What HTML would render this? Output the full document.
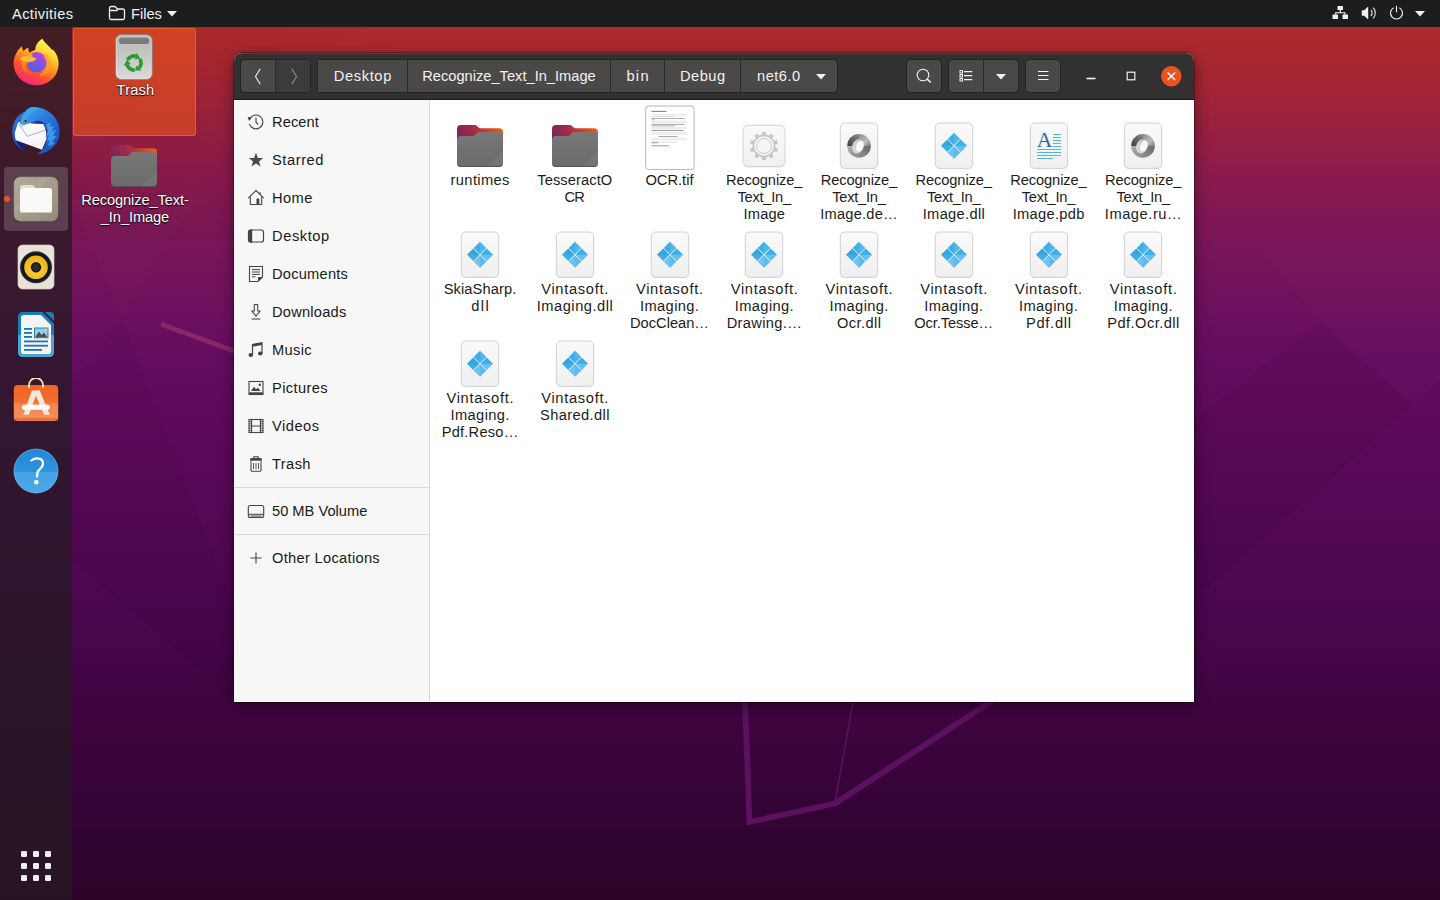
<!DOCTYPE html>
<html lang="en">
<head>
<meta charset="utf-8">
<title>Files</title>
<style>
*{box-sizing:border-box;margin:0;padding:0}
html,body{width:1440px;height:900px;overflow:hidden}
body{position:relative;font-family:"Liberation Sans","DejaVu Sans",sans-serif;font-size:14.67px;color:#fff;
background:#5b0d57}
.abs{position:absolute}
#wall{position:absolute;left:0;top:0;width:1440px;height:900px}
#topbar{position:absolute;left:0;top:0;width:1440px;height:27px;background:#1d1d1d;color:#f2f2f2}
#topbar .t{position:absolute;top:1px;height:27px;line-height:27px;white-space:nowrap}
#dock{position:absolute;left:0;top:27px;width:72px;height:873px;background:rgba(38,26,34,.76)}
#dock .act{position:absolute;left:4px;top:140px;width:64px;height:64px;border-radius:4px;background:rgba(255,255,255,.17)}
#dock .dot{position:absolute;left:4px;top:169px;width:6px;height:6px;border-radius:50%;background:#e95420}
.dicon{position:absolute}
/* desktop */
.dlabel{position:absolute;text-align:center;color:#fff;line-height:17px;text-shadow:0 1px 1px rgba(0,0,0,.9),0 0 2px rgba(0,0,0,.6);white-space:nowrap}
#sel{position:absolute;left:73px;top:28px;width:123px;height:108px;border-radius:3px;background:rgba(233,84,32,.6);border:1px solid rgba(240,96,40,.85)}
/* window */
#win{position:absolute;left:234px;top:53px;width:960px;height:649px;border-radius:8px 8px 0 0;background:#fff;
box-shadow:0 0 0 1px rgba(0,0,0,.3),0 4px 15px rgba(0,0,0,.45)}
#hdr{position:absolute;left:0;top:0;width:960px;height:47px;border-radius:8px 8px 0 0;background:#323031;border-bottom:1px solid #1c1b1b;box-shadow:inset 0 1px 0 rgba(255,255,255,.11)}
.btn{position:absolute;top:6px;height:34px;background:#4a4948;border:1px solid #242323;border-radius:5px;overflow:hidden}
.btn svg{position:absolute}
.dv{position:absolute;top:0;width:1px;height:32px;background:#2a2929}
.seg{position:absolute;top:0;height:32px;line-height:32px;color:#f2f1f0;white-space:nowrap;text-align:center}
#side{position:absolute;left:0;top:47px;width:196px;height:602px;background:#f7f7f7;border-right:1px solid #d8d8d8;color:#1a1a1a}
.srow{position:absolute;left:0;width:195px;height:38px;line-height:38px;padding-left:38px;white-space:nowrap}
.srow svg{position:absolute;left:13px;top:10px;width:18px;height:18px;overflow:visible}
.ssep{position:absolute;left:0;width:195px;height:1px;background:#dadada}
#main{position:absolute;left:196px;top:47px;width:764px;height:602px;background:#fff;color:#1a1a1a}
.f{position:absolute;width:110px;margin-left:-7px;text-align:center;line-height:17px;color:#1b1b1b;white-space:nowrap;padding-top:50px}
.f svg{position:absolute;left:31px;top:0;width:48px;height:48px}
</style>
</head>
<body>
<svg width="0" height="0" style="position:absolute">
<defs>
<linearGradient id="fdb" x1="0" y1=".35" x2="1" y2="0"><stop offset="0" stop-color="#7d2156"/><stop offset=".35" stop-color="#9c2a4c"/><stop offset=".7" stop-color="#d4451f"/><stop offset="1" stop-color="#f2661b"/></linearGradient>
<linearGradient id="fdf" x1="0" y1="0" x2="0" y2="1"><stop offset="0" stop-color="#787878"/><stop offset="1" stop-color="#6a6a6a"/></linearGradient>
<linearGradient id="pgf" x1="0" y1="0" x2="0" y2="1"><stop offset="0" stop-color="#fafafa"/><stop offset="1" stop-color="#efefef"/></linearGradient>
<linearGradient id="jsa" x1="0" y1="0" x2="1" y2="1"><stop offset="0" stop-color="#2e2e2e"/><stop offset=".5" stop-color="#7a7a7a"/><stop offset="1" stop-color="#d6d6d6"/></linearGradient>
<linearGradient id="jsb" x1="1" y1="1" x2="0" y2="0"><stop offset="0" stop-color="#3a3a3a"/><stop offset=".6" stop-color="#9a9a9a"/><stop offset="1" stop-color="#e8e8e8"/></linearGradient>
<linearGradient id="jq1" x1="0" y1="1" x2="1" y2="0"><stop offset="0" stop-color="#3e3e3e"/><stop offset="1" stop-color="#8a8a8a"/></linearGradient>
<linearGradient id="jq2" x1="0" y1="0" x2="1" y2="1"><stop offset="0" stop-color="#8e8e8e"/><stop offset=".6" stop-color="#bcbcbc"/><stop offset="1" stop-color="#7a7a7a"/></linearGradient>
<linearGradient id="jq3" x1="1" y1="0" x2="0" y2="1"><stop offset="0" stop-color="#666666"/><stop offset="1" stop-color="#909090"/></linearGradient>
<linearGradient id="jq4" x1="1" y1="1" x2="0" y2="0"><stop offset="0" stop-color="#8c8c8c"/><stop offset="1" stop-color="#b0b0b0"/></linearGradient>
<linearGradient id="jq5" x1="0" y1="1" x2="1" y2="0"><stop offset="0" stop-color="#e6e6e6"/><stop offset=".6" stop-color="#c4c4c4"/><stop offset="1" stop-color="#8a8a8a"/></linearGradient>
<symbol id="s-folder" viewBox="0 0 48 48">
<path d="M1 7 a4 4 0 0 1 4 -4 h13 c2 0 2.800 .6 3.800 1.700 l.8 .9 c.5 .5 1 .7 1.800 .7 H43 a4 4 0 0 1 4 4 V40 H1 Z" fill="url(#fdb)"/>
<path d="M1 18 a4 4 0 0 1 4 -4 h11.500 c1.500 0 2.200 -.4 3 -1.300 l1.200 -1.400 c.8 -.9 1.500 -1.300 3 -1.300 H43 a4 4 0 0 1 4 4 V41 a4 4 0 0 1 -4 4 H5 a4 4 0 0 1 -4 -4 Z" fill="url(#fdf)"/>
<path d="M47 30 V41 a4 4 0 0 1 -4 4 H30 Z" fill="#fff" opacity=".06"/>
<path d="M1 40 v1 a4 4 0 0 0 4 4 H43 a4 4 0 0 0 4 -4 v-1 a4 4 0 0 1 -4 4 H5 a4 4 0 0 1 -4 -4 Z" fill="#4f4f4f" opacity=".8"/>
</symbol>
<symbol id="s-page" viewBox="0 0 48 48">
<rect x="5.300" y="1.500" width="37.400" height="45.500" rx="4.500" fill="#000" opacity=".10"/>
<rect x="5.300" y="1" width="37.400" height="45.400" rx="4.500" fill="url(#pgf)" stroke="#cdcdcd" stroke-width=".9"/>
</symbol>
<symbol id="s-dll" viewBox="0 0 48 48">
<use href="#s-page"/>
<path d="M24 10.700 L37 23.700 L24 36.700 L11 23.700 Z" fill="#3daee9"/>
<path d="M24 10.700 L30.500 17.200 L24 23.700 Z" fill="#fff" opacity=".10"/>
<path d="M37 23.700 L30.500 30.200 L24 23.700 Z" fill="#fff" opacity=".22"/>
<path d="M24 23.700 L30.500 30.200 L24 36.700 L17.500 30.200 Z" fill="#fff" opacity=".16"/>
<path d="M11 23.700 L17.500 17.200 L24 23.700 Z" fill="#000" opacity=".06"/>
<path d="M24 23.700 L24 36.700 L17.500 30.200 Z" fill="#fff" opacity=".12"/>
<path d="M17.500 17.200 L30.500 30.200 M30.500 17.200 L17.500 30.200" stroke="#f4fbff" stroke-width=".9" fill="none"/>
</symbol>
<symbol id="s-json" viewBox="0 0 48 48">
<use href="#s-page"/>
<path d="M24 23.900 L12.200 23.900 A11.800 11.800 0 0 1 24 12.100 Z" fill="url(#jq1)"/>
<path d="M24 23.900 L24 12.100 A11.800 11.800 0 0 1 35.800 23.900 Z" fill="url(#jq2)"/>
<path d="M24 23.900 L35.800 23.900 A11.800 11.800 0 0 1 24 35.700 Z" fill="url(#jq3)"/>
<path d="M24 23.900 L24 35.700 A11.800 11.800 0 0 1 12.200 23.900 Z" fill="url(#jq4)"/>
<ellipse cx="23" cy="24.300" rx="5.700" ry="7.400" transform="rotate(20 23 24.300)" fill="url(#jq5)"/>
<ellipse cx="24.900" cy="24" rx="3.700" ry="5.800" transform="rotate(20 24.900 24)" fill="#f8f8f8"/>
</symbol>
<symbol id="s-exec" viewBox="0 0 48 48">
<rect x="3" y="3.800" width="42" height="41.500" rx="5" fill="#000" opacity=".10"/>
<rect x="3" y="3.300" width="42" height="41.400" rx="5" fill="url(#pgf)" stroke="#cfcfcf" stroke-width=".9"/>
<g transform="translate(24 24)" fill="#c6c6c6">
<g id="gt"><rect x="-1.900" y="-14" width="3.800" height="3.600" rx=".5"/><rect x="-1.900" y="10.400" width="3.800" height="3.600" rx=".5"/></g>
<use href="#gt" transform="rotate(36)"/><use href="#gt" transform="rotate(72)"/><use href="#gt" transform="rotate(108)"/><use href="#gt" transform="rotate(144)"/>
<circle r="10.600" fill="none" stroke="#c6c6c6" stroke-width="1.700"/>
<circle r="7.500" fill="none" stroke="#c6c6c6" stroke-width=".9"/>
</g>
</symbol>
<symbol id="s-pdb" viewBox="0 0 48 48">
<use href="#s-page"/>
<text x="11.800" y="25.300" font-family="'Liberation Serif','DejaVu Serif',serif" font-size="21.500" fill="#2b67b0">A</text>
<g stroke="#4db4ec" stroke-width="1">
<path d="M28 12.500 H36 M28 15.500 H36 M28 18.500 H36 M28 21.500 H36 M28 24.500 H36 M12 27.500 H36 M12 30.500 H36 M12 33.500 H36 M12 36.500 H28"/>
</g>
</symbol>
</defs></svg>
<svg id="wall" viewBox="0 0 1440 900">
<defs>
<linearGradient id="wg" x1="0" y1="0" x2="0" y2="1">
<stop offset="0" stop-color="#b32b29"/>
<stop offset="0.03" stop-color="#b02a2a"/>
<stop offset="0.11" stop-color="#a02338"/>
<stop offset="0.2" stop-color="#8a1a4e"/>
<stop offset="0.28" stop-color="#78155a"/>
<stop offset="0.39" stop-color="#660d60"/>
<stop offset="0.5" stop-color="#5a0959"/>
<stop offset="0.61" stop-color="#500752"/>
<stop offset="0.72" stop-color="#47064a"/>
<stop offset="0.78" stop-color="#400541"/>
<stop offset="0.89" stop-color="#350337"/>
<stop offset="1" stop-color="#2b0428"/>
</linearGradient>
<linearGradient id="wl" x1="0" y1="0" x2="1" y2="0">
<stop offset="0" stop-color="#000" stop-opacity=".06"/>
<stop offset="0.3" stop-color="#000" stop-opacity="0"/>
</linearGradient>
</defs>
<rect width="1440" height="900" fill="url(#wg)"/>
<rect width="1440" height="240" fill="url(#wl)"/>
<polygon points="122,318 234,610 234,700 72,560 72,385" fill="#000" opacity=".03"/>
<polygon points="72,200 195,200 122,318" fill="#fff" opacity=".012"/>
<polygon points="1194,420 1320,321 1413,405 1194,600" fill="#000" opacity=".04"/>
<polygon points="1260,250 1440,250 1440,380 1413,405 1320,321" fill="#fff" opacity=".012"/>
<path d="M161 324 L234 351" stroke="#8a2769" stroke-width="5" fill="none"/>
<path d="M745 700 L749.500 822 L835 803.500 L992 701" stroke="#5c1060" stroke-width="5.800" fill="none" stroke-linejoin="miter"/>
<path d="M835 802 L853.500 700" stroke="#5c1060" stroke-width="1.500" fill="none"/>
</svg>
<div id="dock"><div class="act"></div><div class="dot"></div>
<!-- firefox -->
<svg class="dicon" style="left:12px;top:10px" width="48" height="50" viewBox="0 0 48 50">
<defs>
<linearGradient id="ffa" x1=".78" y1=".08" x2=".3" y2="1"><stop offset="0" stop-color="#fff55a"/><stop offset=".22" stop-color="#ffd83a"/><stop offset=".45" stop-color="#ff9d22"/><stop offset=".7" stop-color="#ff5230"/><stop offset=".9" stop-color="#f6306a"/><stop offset="1" stop-color="#e5108a"/></linearGradient>
<linearGradient id="ffb" x1=".75" y1="0" x2=".3" y2="1"><stop offset="0" stop-color="#c63be6"/><stop offset=".45" stop-color="#8a4fe6"/><stop offset="1" stop-color="#4f63d6"/></linearGradient>
<linearGradient id="ffc" x1=".2" y1="0" x2=".6" y2="1"><stop offset="0" stop-color="#ffc030"/><stop offset=".35" stop-color="#ff8a20"/><stop offset=".75" stop-color="#ff5a2c"/><stop offset="1" stop-color="#ff4634"/></linearGradient>
<linearGradient id="ffd" x1="0" y1="0" x2="0" y2="1"><stop offset="0" stop-color="#ff8a1e" stop-opacity=".0"/><stop offset=".5" stop-color="#ff4a34" stop-opacity=".5"/><stop offset="1" stop-color="#f02a70" stop-opacity=".45"/></linearGradient>
</defs>
<path d="M30.300 1.700 C32 5 35 7 37 9.500 C38.500 11 39.500 12 40.300 13.700 L40.300 12 C43 14.500 44.800 17.500 45.600 20.500 C46.800 24 47 28 46 32 C43.500 42 34.500 48.500 24 48.300 C12 48 2.200 39 1.700 27 C1.500 22.500 2.800 19 4.200 16.500 C5.500 13.500 8 10.500 10 9.300 C10 11.500 10.800 13 11.700 14.300 C12.800 12.500 14.500 11.300 16.300 10.700 C16.200 12.500 16.600 14.200 17.300 15.700 C19 14.500 21.500 13.500 23.300 12.700 C23 8.500 26 4.500 30.300 1.700 Z" fill="url(#ffa)"/>
<path d="M4.200 16.500 C5.500 13.500 8 10.500 10 9.300 C10 11.500 10.800 13 11.700 14.300 C12.800 12.500 14.500 11.300 16.300 10.700 C16.200 12.500 16.600 14.200 17.300 15.700 L14 22 L20 42 L24 48.300 C12 48 2.200 39 1.700 27 C1.500 22.500 2.800 19 4.200 16.500 Z" fill="url(#ffd)"/>
<circle cx="24.500" cy="25.200" r="10.300" fill="url(#ffb)"/>
<path d="M28.700 17.300 C31 17 32.500 18 33.400 19.200 C32.200 19 31.200 19.300 30.500 19.800 C33.700 22 35.200 26 34.500 30 C33.700 34 30.500 37 26 37.500 C30 40 36.500 37.500 38.700 31 C40.700 25.500 38.200 19 33.700 16.400 C31.700 15.600 29.800 16.100 28.700 17.300 Z" fill="#ffa024" opacity=".6"/>
<path d="M7.700 21.500 C10 19.500 13 19 15.500 19.500 C17 17.500 19 16.800 20.500 17 C19.800 18.500 20.500 20 21.500 20.500 C22.500 21 23.500 21.200 24.300 21.800 C23.500 23.500 21.500 24.300 19.500 24.500 C16.500 24.800 14.500 26.500 14.300 28.500 C14 33 18 36.500 24 36.300 C27 36.200 29.500 35 31 33.500 C28.500 38.500 22 40.500 16.500 38 C11 35.500 8.500 29 10.500 23.500 C9.500 23 8.500 22.300 7.700 21.500 Z" fill="url(#ffc)"/>
<path d="M7.700 21.500 C10 19.500 13 19 15.500 19.500 C17.500 19.800 20 20.200 21.500 20.500 C22.500 21 23.500 21.200 24.300 21.800 C23.500 23.500 21.500 24.300 19.500 24.500 C15 24.800 10.500 24 7.700 21.500 Z" fill="#ffc233" opacity=".9"/>
</svg>
<!-- thunderbird -->
<svg class="dicon" style="left:11px;top:79px" width="50" height="50" viewBox="0 0 50 50">
<defs>
<linearGradient id="tba" x1=".15" y1="0" x2=".75" y2="1"><stop offset="0" stop-color="#2f7fe0"/><stop offset=".5" stop-color="#1f55c0"/><stop offset="1" stop-color="#16389c"/></linearGradient>
<linearGradient id="tbc" x1=".1" y1="0" x2=".9" y2="1"><stop offset="0" stop-color="#3fb0f2"/><stop offset=".35" stop-color="#2a7fe0"/><stop offset=".7" stop-color="#2060cc"/><stop offset="1" stop-color="#1b49b0"/></linearGradient>
<linearGradient id="tbb" x1="0" y1="0" x2="1" y2="1"><stop offset="0" stop-color="#ffffff"/><stop offset="1" stop-color="#f1f0f4"/></linearGradient>
</defs>
<path d="M26.300 48.300 C36 47 46 40 48.500 28 C50.500 14 40 3.500 27 3 C24 2 22 1 20.300 1.300 C17.500 2 15.500 3.500 14 5.500 C6 9 1 17 1.200 27 C1.500 36 7 42 13.500 44.500 L11.500 39.500 C7 35 5 29 5.500 24 L8 17 L30 17 L36 24 L37 34 L33 42 Z" fill="url(#tba)"/>
<path d="M5 34.300 L15 38 L14 44.600 C10.500 43 7 39.500 5 34.300 Z" fill="#1c1c78"/>
<path d="M7 16.300 L32.300 18 C34.500 22 35.700 27 35.700 32.300 L31 43.700 L5 34.300 C3.800 31.500 3.600 29 4 26.300 Z" fill="url(#tbb)"/>
<path d="M7.300 17.300 L16.300 30.300 L34 24.300" fill="none" stroke="#a3a1aa" stroke-width=".8"/>
<path d="M20.300 1.300 C28 0 38 4 43 11 C48 18 49.500 27 47 34 C44 42 36 47.500 26.300 48.300 C30 45.500 33 42.500 34.500 39 L32.800 40.200 C35 36.500 36 33 36 30 L34.600 31.500 C36 27 36 23 35 20 C33.500 16 29 14 25 15 L13 19 L9.300 18.300 C9.500 12 14 4 20.300 1.300 Z" fill="url(#tbc)"/>
<g fill="#4ab6f4" opacity=".9"><path d="M35 19 L40 16 L39 21 L43 19.500 L41 25 L45 24 L42 30 L45.500 30 L41 36 L44 36.500 L38 42 L40 38 L36.500 40 L39 34 L36 35.500 L38 29 L35.800 30 L37 24 Z" opacity=".75"/></g>
<path d="M20.300 1.300 C24 1 27 2 29.500 3.500 C24 3.500 18 7 15.500 12 C14 15 13.800 17.500 13 19 L9.300 18.300 C9.500 12 14 4 20.300 1.300 Z" fill="#3fa6ee" opacity=".8"/>
<path d="M25 15 C29 14 33.500 16 35 20 L32.300 18 L20 17.200 Z" fill="#2a2a90" opacity=".75"/>
<path d="M9.300 18.300 L13 19 L11.500 21.300 L9.800 21 Z" fill="#a4dcea"/>
<circle cx="14.500" cy="15" r="1.500" fill="#d98a2a"/><circle cx="14.500" cy="15" r="1" fill="#1a1420"/>
</svg>
<!-- files -->
<svg class="dicon" style="left:13px;top:149px" width="46" height="46" viewBox="0 0 46 46">
<defs><linearGradient id="fla" x1="0" y1="0" x2="1" y2="1"><stop offset="0" stop-color="#b3ab9b"/><stop offset="1" stop-color="#958c7a"/></linearGradient></defs>
<rect x=".3" y=".3" width="45.400" height="45.400" rx="7" fill="#1a0a14" opacity=".35"/>
<rect x=".8" y=".8" width="44.400" height="44.400" rx="6.500" fill="url(#fla)"/>
<path d="M30 .8 H38.700 L.8 38.700 V30 Z" fill="#fff" opacity=".06"/>
<rect x=".8" y=".8" width="44.400" height="44.400" rx="6.500" fill="none" stroke="#7d7566" stroke-width=".8" opacity=".6"/>
<path d="M7 11.500 a2.500 2.500 0 0 1 2.500 -2.500 h9 c1.500 0 2 .6 2.800 1.600 l1.200 1.400 h-15.500 z" fill="#e4e0d8"/>
<path d="M7 14.500 a2.500 2.500 0 0 1 2.500 -2.500 h27 a2.500 2.500 0 0 1 2.500 2.500 v20 a2.500 2.500 0 0 1 -2.500 2.500 h-27 a2.500 2.500 0 0 1 -2.500 -2.500 z" fill="#faf9f7"/>
<path d="M7 33.500 v1 a2.500 2.500 0 0 0 2.500 2.500 h27 a2.500 2.500 0 0 0 2.500 -2.500 v-1 a2.500 2.500 0 0 1 -2.500 2.500 h-27 a2.500 2.500 0 0 1 -2.500 -2.500 z" fill="#cfcabf"/>
</svg>
<!-- rhythmbox -->
<svg class="dicon" style="left:17px;top:217px" width="38" height="46" viewBox="0 0 38 46">
<defs><radialGradient id="rba" cx=".5" cy=".6" r=".6"><stop offset="0" stop-color="#fbd34a"/><stop offset="1" stop-color="#eeb30a"/></radialGradient></defs>
<rect x="1" y="1" width="36" height="44" rx="4.500" fill="#e8e3d8"/>
<rect x="1" y="1" width="36" height="44" rx="4.500" fill="none" stroke="#cfc8b8" stroke-width=".7"/>
<circle cx="19" cy="23.300" r="16" fill="#2a2a33"/>
<circle cx="19" cy="23.300" r="14.600" fill="#15151c"/>
<circle cx="19" cy="23.300" r="11.800" fill="url(#rba)"/>
<circle cx="19" cy="23.300" r="5.200" fill="#1a1a1f"/>
<circle cx="19" cy="23.300" r="3.400" fill="#2b2b2f"/>
</svg>
<!-- writer -->
<svg class="dicon" style="left:17px;top:284px" width="38" height="47" viewBox="0 0 38 47">
<path d="M5.500 1 H25.500 L37 12.500 V41.500 a4.500 4.500 0 0 1 -4.500 4.500 H5.500 a4.500 4.500 0 0 1 -4.500 -4.500 V5.500 a4.500 4.500 0 0 1 4.500 -4.500 Z" fill="#1c7bb2"/>
<path d="M1 24 H37 V41.500 a4.500 4.500 0 0 1 -4.500 4.500 H5.500 a4.500 4.500 0 0 1 -4.500 -4.500 Z" fill="#4ba3d0"/>
<path d="M6.500 4 H24 L34 14 V40.500 a2.500 2.500 0 0 1 -2.500 2.500 H6.500 a2.500 2.500 0 0 1 -2.500 -2.500 V6.500 a2.500 2.500 0 0 1 2.500 -2.500 Z" fill="#f4f4f4"/>
<path d="M28 1 H33 a4 4 0 0 1 4 4 V10 Z" fill="#1c7bb2"/>
<g fill="#1a72b8"><rect x="7" y="17" width="8" height="1.800"/><rect x="7" y="21" width="8" height="1.800"/><rect x="7" y="25" width="8" height="1.800"/><rect x="7" y="29.500" width="24" height="1.800"/><rect x="7" y="33.800" width="24" height="1.800"/><rect x="7" y="38" width="18" height="1.800"/></g>
<rect x="17.500" y="17" width="13.500" height="9.800" fill="#8fd0ee" stroke="#1a72b8" stroke-width=".9"/>
<path d="M18.200 26.300 L22 20.500 L24.500 24 L27 21.500 L30.400 26.300 Z" fill="#4d4d4d"/>
<path d="M27.500 17.500 h3 v3 z" fill="#f6c413"/>
</svg>
<!-- software -->
<svg class="dicon" style="left:13px;top:351px" width="46" height="44" viewBox="0 0 46 44">
<defs><linearGradient id="swa" x1="0" y1="0" x2="0" y2="1"><stop offset="0" stop-color="#f0641f"/><stop offset=".5" stop-color="#f26f30"/><stop offset=".5" stop-color="#f4844d"/><stop offset="1" stop-color="#f4925f"/></linearGradient></defs>
<path d="M16 8.500 V7 a7 7 0 0 1 14 0 V8.500" fill="none" stroke="#f7dca8" stroke-width="1.800"/>
<rect x=".8" y="7" width="44.400" height="36" rx="4" fill="url(#swa)"/>
<rect x=".8" y="40" width="44.400" height="3" rx="1.500" fill="#d85a1c" opacity=".5"/>
<path d="M18.900 12.600 H26.700 L36.800 36.700 H31.300 L22.800 18 L15.800 36.700 H10.300 Z" fill="#fce6da"/>
<rect x="8.800" y="26.800" width="28" height="5" rx="2.500" fill="#ffffff"/>
<rect x="15" y="6.800" width="2" height="3" fill="#f7dca8"/><rect x="29" y="6.800" width="2" height="3" fill="#f7dca8"/>
</svg>
<!-- help -->
<svg class="dicon" style="left:13px;top:421px" width="46" height="46" viewBox="0 0 46 46">
<defs><linearGradient id="hpa" x1="0" y1="0" x2="0" y2="1"><stop offset="0" stop-color="#2587d6"/><stop offset=".53" stop-color="#2e93de"/><stop offset=".53" stop-color="#45a3e5"/><stop offset="1" stop-color="#4aa8e8"/></linearGradient></defs>
<circle cx="23" cy="23" r="22.300" fill="url(#hpa)"/>
<circle cx="23" cy="23" r="22" fill="none" stroke="#8fcaf3" stroke-width=".6" opacity=".7"/>
<path d="M18.300 12.500 C20 11 22 10.300 24 10.300 C27.800 10.300 30 12.500 30 15.500 C30 18.500 28 20 26 22 C24.500 23.500 24 25.500 24 28.500" fill="none" stroke="#fff" stroke-width="2.300" stroke-linecap="round"/>
<circle cx="23.300" cy="34.300" r="2.300" fill="#fff"/>
</svg>
<!-- apps grid -->
<svg class="dicon" style="left:21px;top:824px" width="30" height="30" viewBox="0 0 30 30"><g fill="#f0f0f0"><rect x="0" y="0" width="6" height="6" rx="1.300"/><rect x="12" y="0" width="6" height="6" rx="1.300"/><rect x="24" y="0" width="6" height="6" rx="1.300"/><rect x="0" y="12" width="6" height="6" rx="1.300"/><rect x="12" y="12" width="6" height="6" rx="1.300"/><rect x="24" y="12" width="6" height="6" rx="1.300"/><rect x="0" y="24" width="6" height="6" rx="1.300"/><rect x="12" y="24" width="6" height="6" rx="1.300"/><rect x="24" y="24" width="6" height="6" rx="1.300"/></g></svg>
</div>
<div id="topbar">
<span class="t" style="left:12px;letter-spacing:.35px">Activities</span>
<svg class="abs" style="left:108px;top:5px" width="18" height="16" viewBox="0 0 18 16"><path d="M1.500 4.500 V13 a1.500 1.500 0 0 0 1.500 1.500 H15 a1.500 1.500 0 0 0 1.500 -1.500 V5.500 a1.500 1.500 0 0 0 -1.500 -1.500 H9.500 M1.500 6.500 V3 a1.500 1.500 0 0 1 1.500 -1.500 H6.500 a1.500 1.500 0 0 1 1.300 .8 L9.500 4 a1 1 0 0 1 -.9 1.500 H1.500" fill="none" stroke="#f2f2f2" stroke-width="1.300" stroke-linejoin="round"/></svg>
<span class="t" style="left:131px;letter-spacing:0">Files</span>
<svg class="abs" style="left:167px;top:11px" width="10" height="6" viewBox="0 0 10 6"><path d="M0 0 H10 L5 5.500 Z" fill="#f2f2f2"/></svg>
<svg class="abs" style="left:1332px;top:5px" width="17" height="15" viewBox="0 0 17 15"><g fill="#f2f2f2"><rect x="5.500" y="1" width="5.500" height="4" rx=".6"/><rect x=".5" y="9.500" width="5.500" height="4.500" rx=".6"/><rect x="10.500" y="9.500" width="5.500" height="4.500" rx=".6"/><path d="M7.700 5 h1.200 v2.200 h4.600 v2.400 h-1.200 v-1.300 h-8 v1.300 h-1.200 v-2.400 h4.600 z"/></g></svg>
<svg class="abs" style="left:1361px;top:6px" width="16" height="14" viewBox="0 0 16 14"><path d="M.8 4.300 H3.200 L7.200 .6 V13.400 L3.200 9.700 H.8 Z" fill="#f2f2f2"/><path d="M9.900 4.200 a4 4 0 0 1 0 5.600" fill="none" stroke="#f2f2f2" stroke-width="1.200"/><path d="M12.100 1.800 a7.200 7.200 0 0 1 0 10.400" fill="none" stroke="#f2f2f2" stroke-width="1.200" opacity=".85"/></svg>
<svg class="abs" style="left:1389px;top:5px" width="15" height="15" viewBox="0 0 15 15"><path d="M4.600 2.700 A6 6 0 1 0 10.400 2.700" fill="none" stroke="#f2f2f2" stroke-width="1.100"/><path d="M7.500 .8 V7.300" stroke="#f2f2f2" stroke-width="1.100"/></svg>
<svg class="abs" style="left:1415px;top:11px" width="10" height="6" viewBox="0 0 10 6"><path d="M0 0 H10 L5 5.500 Z" fill="#f2f2f2"/></svg>
</div>
<div id="sel"></div>
<svg class="abs" style="left:110px;top:33px" width="48" height="48" viewBox="0 0 48 48">
<defs><linearGradient id="tra" x1="0" y1="0" x2="0" y2="1"><stop offset="0" stop-color="#b5b5b5"/><stop offset=".5" stop-color="#c8c8c8"/><stop offset="1" stop-color="#dadada"/></linearGradient></defs>
<rect x="5.600" y="1.700" width="36.600" height="44.700" rx="5.500" fill="url(#tra)" stroke="#8c8784" stroke-width="1"/>
<rect x="6.700" y="2.800" width="34.400" height="42.500" rx="4.500" fill="none" stroke="#ffffff" stroke-width=".8" opacity=".45"/>
<rect x="9.100" y="4.800" width="30" height="6.200" rx="2.800" fill="#7b7b7b"/>
<g transform="translate(24 30)">
<g id="rc"><path d="M-6.340 -2.960 A7 7 0 0 1 1.810 -6.760" fill="none" stroke="#2c9a2c" stroke-width="3.800"/><path d="M.9 -3.400 L2.700 -10.300 L6.200 -4.400 Z" fill="#2c9a2c"/></g>
<use href="#rc" transform="rotate(120)"/><use href="#rc" transform="rotate(240)"/>
</g>
</svg>
<div class="dlabel" style="left:85.500px;top:82px;width:100px;letter-spacing:.2px">Trash</div>
<svg class="abs" style="left:110px;top:142px" width="48" height="48"><use href="#s-folder"/></svg>
<div class="dlabel" style="left:75px;top:192px;width:120px;letter-spacing:-.1px">Recognize_Text-<br>_In_Image</div>
<div id="win">
<div id="hdr">
<div class="btn" style="left:6px;width:71px"><div class="abs" style="left:35px;top:0;width:35px;height:32px;background:#3c3b3b"></div><div class="dv" style="left:34px"></div>
<svg style="left:12.300px;top:7.600px" width="10" height="17" viewBox="0 0 10 17"><path d="M7.300 .8 L2.500 8.500 L7.300 16.200" fill="none" stroke="#efefef" stroke-width="1.100"/></svg>
<svg style="left:47.500px;top:7.600px" width="10" height="17" viewBox="0 0 10 17"><path d="M2.700 .8 L7.500 8.500 L2.700 16.200" fill="none" stroke="#8f8e8d" stroke-width="1.100"/></svg>
</div>
<div class="btn" style="left:83px;width:521px;border-radius:0 5px 5px 0">
<div class="seg" style="left:0;width:89px;letter-spacing:.65px;text-indent:.65px">Desktop</div><div class="dv" style="left:89px"></div>
<div class="seg" style="left:90px;width:202px">Recognize_Text_In_Image</div><div class="dv" style="left:292px"></div>
<div class="seg" style="left:293px;width:53px;letter-spacing:1.300px;text-indent:1.300px">bin</div><div class="dv" style="left:346px"></div>
<div class="seg" style="left:347px;width:75px;letter-spacing:.5px;text-indent:.5px">Debug</div><div class="dv" style="left:422px"></div>
<div class="seg" style="left:439px;text-align:left;letter-spacing:.5px">net6.0</div>
<svg style="left:498px;top:14px" width="10" height="6" viewBox="0 0 10 6"><path d="M0 0 H10 L5 5.500 Z" fill="#f2f2f2"/></svg>
</div>
<div class="btn" style="left:672px;width:36px"><svg style="left:9px;top:8px" width="17" height="17" viewBox="0 0 17 17"><circle cx="7" cy="7" r="5.800" fill="none" stroke="#f2f2f2" stroke-width="1.100"/><path d="M11.200 11.200 L14.800 14.500" stroke="#f2f2f2" stroke-width="1.600"/></svg></div>
<div class="btn" style="left:714px;width:71px"><div class="dv" style="left:34px"></div>
<svg style="left:10px;top:10px" width="14" height="13" viewBox="0 0 14 13"><g fill="none" stroke="#f2f2f2" stroke-width="1"><rect x="1" y=".5" width="2.500" height="2.500"/><rect x="1" y="4.500" width="2.500" height="2.500"/><rect x="1" y="8.500" width="2.500" height="2.500"/><path d="M5 1.600 H13.300 M5 5.600 H13.300 M5 9.600 H13.300" stroke-width="1.100"/></g></svg>
<svg style="left:47px;top:14px" width="10" height="6" viewBox="0 0 10 6"><path d="M0 0 H10 L5 5.500 Z" fill="#f2f2f2"/></svg>
</div>
<div class="btn" style="left:791px;width:36px"><svg style="left:12px;top:10px" width="11" height="11" viewBox="0 0 11 11"><path d="M0 1.500 H10.500 M0 5.500 H10.500 M0 9.500 H10.500" stroke="#f5f5f5" stroke-width="1.100"/></svg></div>
<svg class="abs" style="left:852px;top:24px" width="10" height="3" viewBox="0 0 10 3"><rect x=".5" y=".7" width="9" height="1.600" fill="#f2f2f2"/></svg>
<svg class="abs" style="left:892px;top:18px" width="10" height="10" viewBox="0 0 10 10"><rect x="1.200" y="1.200" width="7.600" height="7.600" fill="none" stroke="#f2f2f2" stroke-width="1.200"/></svg>
<svg class="abs" style="left:927px;top:13px" width="21" height="21" viewBox="0 0 21 21"><circle cx="10.300" cy="10.200" r="10.200" fill="#e95420"/><path d="M6.500 6.400 L14.100 14 M14.100 6.400 L6.500 14" stroke="#fff" stroke-width="1.400"/></svg>
</div>
<div id="side">
<div class="srow" style="top:3px;letter-spacing:0.1px"><svg viewBox="0 0 18 18"><g fill="none" stroke="#444" stroke-width="1.100"><path d="M2.600 6.200 A6.900 6.900 0 1 1 2.300 10.800"/><path d="M9 4.500 V9.200 L11.300 11.500"/></g><path d="M.6 4 L5 4.600 L2 8 Z" fill="#444"/></svg>Recent</div>
<div class="srow" style="top:41px;letter-spacing:0.57px"><svg viewBox="0 0 18 18"><path d="M9 1.800 L10.900 6.900 L16.200 7.100 L12 10.400 L13.500 15.600 L9 12.600 L4.500 15.600 L6 10.400 L1.800 7.100 L7.100 6.900 Z" fill="#4a4a4a"/></svg>Starred</div>
<div class="srow" style="top:79px;letter-spacing:0.4px"><svg viewBox="0 0 18 18"><g fill="none" stroke="#444" stroke-width="1.100"><path d="M1.200 9.200 L9 1.600 L16.800 9.200"/><path d="M3.300 7.600 V15.500 H14.700 V7.600"/><path d="M13.200 5.300 V3.200"/></g><rect x="9.500" y="9.500" width="2.800" height="6" fill="#444"/></svg>Home</div>
<div class="srow" style="top:117px;letter-spacing:0.57px"><svg viewBox="0 0 18 18"><rect x="1.500" y="3" width="15" height="12" rx="2.300" fill="none" stroke="#444" stroke-width="1.200"/><path d="M3.800 2.500 H5.200 V15.500 H3.800 A2.800 2.800 0 0 1 1 12.700 V5.300 A2.800 2.800 0 0 1 3.800 2.500 Z" fill="#444"/></svg>Desktop</div>
<div class="srow" style="top:155px;letter-spacing:0.22px"><svg viewBox="0 0 18 18"><path d="M2.500 1.500 H15.500 V12 L11 16.500 H2.500 Z" fill="none" stroke="#444" stroke-width="1.100"/><path d="M15.500 12 H11 V16.500 Z" fill="#444"/><path d="M5 4.600 H13 M5 7 H13 M5 9.400 H13 M5 11.800 H8.500" stroke="#444" stroke-width="1"/></svg>Documents</div>
<div class="srow" style="top:193px;letter-spacing:0.22px"><svg viewBox="0 0 18 18"><path d="M7.300 1.500 H10.700 V8 H13.200 L9 13.200 L4.800 8 H7.300 Z" fill="none" stroke="#444" stroke-width="1.100" stroke-linejoin="round"/><path d="M4.700 16 H13.300" stroke="#444" stroke-width="1.100"/></svg>Downloads</div>
<div class="srow" style="top:231px;letter-spacing:0.34px"><svg viewBox="0 0 18 18"><path d="M5.500 13.500 V3.500 L15 1.800 V12" fill="none" stroke="#444" stroke-width="1.200"/><path d="M5.500 3.500 L15 1.800 V4 L5.500 5.700 Z" fill="#444"/><ellipse cx="3.800" cy="14" rx="2.300" ry="1.900" fill="#444"/><ellipse cx="13.300" cy="12.500" rx="2.300" ry="1.900" fill="#444"/></svg>Music</div>
<div class="srow" style="top:269px;letter-spacing:0.37px"><svg viewBox="0 0 18 18"><rect x="2" y="2.500" width="14" height="13" fill="none" stroke="#444" stroke-width="1.100"/><rect x="2" y="13.300" width="14" height="2.200" fill="#444"/><path d="M4 12 L7 7.800 L9 10.300 L10.800 8.800 L13.600 12 Z" fill="#444"/><circle cx="12.800" cy="5.700" r="1.200" fill="#444"/></svg>Pictures</div>
<div class="srow" style="top:307px;letter-spacing:0.5px"><svg viewBox="0 0 18 18"><g fill="none" stroke="#444" stroke-width="1.100"><rect x="2" y="2.500" width="14" height="13"/><path d="M4.600 2.500 V15.500 M13.400 2.500 V15.500 M4.600 9 H13.400"/></g><path d="M2 4.500 H4.600 M2 6.800 H4.600 M2 9 H4.600 M2 11.300 H4.600 M2 13.500 H4.600 M13.400 4.500 H16 M13.400 6.800 H16 M13.400 9 H16 M13.400 11.300 H16 M13.400 13.500 H16" stroke="#444" stroke-width=".9"/></svg>Videos</div>
<div class="srow" style="top:345px;letter-spacing:0.4px"><svg viewBox="0 0 18 18"><g fill="none" stroke="#444" stroke-width="1.100"><path d="M4 6.200 V15 a1.300 1.300 0 0 0 1.300 1.300 H12.700 a1.300 1.300 0 0 0 1.300 -1.300 V6.200"/><path d="M6.800 3 V1.800 H11.200 V3"/><path d="M6.500 8 V14 M9 8 V14 M11.500 8 V14" stroke-width=".9"/></g><path d="M3 5.800 V4.500 a1.500 1.500 0 0 1 1.500 -1.500 H13.500 a1.500 1.500 0 0 1 1.500 1.500 V5.800 Z" fill="#444"/></svg>Trash</div>
<div class="ssep" style="top:387px"></div>
<div class="srow" style="top:392px;letter-spacing:0px"><svg viewBox="0 0 18 18"><rect x="1.300" y="3.500" width="15.400" height="12" rx="2" fill="none" stroke="#444" stroke-width="1.100"/><path d="M1.300 12.300 H16.700 M3.500 14 H14.500" stroke="#444" stroke-width="1"/></svg>50 MB Volume</div>
<div class="ssep" style="top:434px"></div>
<div class="srow" style="top:439px;letter-spacing:0.3px"><svg viewBox="0 0 18 18"><path d="M9 3.500 V14.500 M3.500 9 H14.500" stroke="#444" stroke-width="1.100"/></svg>Other Locations</div>
</div>
<div id="main">
<div class="f" style="left:2px;top:22px"><svg><use href="#s-folder"/></svg><span style="letter-spacing:0.38px;margin-right:-0.38px">runtimes</span></div>
<div class="f" style="left:96.75px;top:22px"><svg><use href="#s-folder"/></svg><span style="letter-spacing:0.1px;margin-right:-0.1px">TesseractO</span><br><span style="letter-spacing:-0.75px;margin-right:0.75px">CR</span></div>
<div class="f" style="left:191.5px;top:22px"><svg style="left:30px;top:-17px;width:50px;height:65px" viewBox="0 0 50 65"><rect x=".7" y="1" width="48.400" height="63.600" rx="3" fill="#fff" stroke="#b4b7ad" stroke-width="1"/><g fill="#ededed"><rect x="6.500" y="15.500" width="35.500" height="3"/><rect x="6.500" y="22" width="35.500" height="2.500"/><rect x="6.500" y="26.600" width="35.500" height="3.200"/><rect x="6.500" y="32.600" width="35.500" height="3"/></g><g fill="none" stroke-width=".7"><path d="M6.500 6.400 H21.300" stroke="#5a5a5a" stroke-width=".8"/><path d="M6.500 9.800 H41.500 M6.500 11.500 H30" stroke="#cfcfcf"/><path d="M6.500 13.500 H39.500 M6.500 19.500 H39.500 M6.500 20.900 H30" stroke="#8a8a8a"/><path d="M6.500 14.700 H10" stroke="#b5b5b5"/><path d="M6.500 25.500 H38.500" stroke="#7a7a7a"/><path d="M13.500 31.500 H32.500" stroke="#858585"/><path d="M6.500 37.300 H13.500" stroke="#7a7a7a"/><path d="M13.500 37.300 H32.500 M6.500 38.600 H13" stroke="#d4d4d4"/><path d="M6.500 40.500 H23.500" stroke="#9a9a9a"/><path d="M6.500 41.800 H26" stroke="#c4c4c4"/></g></svg>OCR.tif</div>
<div class="f" style="left:286.25px;top:22px"><svg><use href="#s-exec"/></svg><span style="letter-spacing:-0.1px;margin-right:0.1px">Recognize_</span><br><span style="letter-spacing:-0.25px;margin-right:0.25px">Text_In_</span><br><span style="letter-spacing:0.2px;margin-right:-0.2px">Image</span></div>
<div class="f" style="left:381px;top:22px"><svg><use href="#s-json"/></svg><span style="letter-spacing:-0.1px;margin-right:0.1px">Recognize_</span><br><span style="letter-spacing:-0.25px;margin-right:0.25px">Text_In_</span><br><span style="letter-spacing:0.22px;margin-right:-0.22px">Image.de…</span></div>
<div class="f" style="left:475.75px;top:22px"><svg><use href="#s-dll"/></svg><span style="letter-spacing:-0.1px;margin-right:0.1px">Recognize_</span><br><span style="letter-spacing:-0.25px;margin-right:0.25px">Text_In_</span><br><span style="letter-spacing:0.33px;margin-right:-0.33px">Image.dll</span></div>
<div class="f" style="left:570.5px;top:22px"><svg><use href="#s-pdb"/></svg><span style="letter-spacing:-0.1px;margin-right:0.1px">Recognize_</span><br><span style="letter-spacing:-0.25px;margin-right:0.25px">Text_In_</span><br><span style="letter-spacing:0.3px;margin-right:-0.3px">Image.pdb</span></div>
<div class="f" style="left:665.25px;top:22px"><svg><use href="#s-json"/></svg><span style="letter-spacing:-0.1px;margin-right:0.1px">Recognize_</span><br><span style="letter-spacing:-0.25px;margin-right:0.25px">Text_In_</span><br><span style="letter-spacing:0.56px;margin-right:-0.56px">Image.ru…</span></div>
<div class="f" style="left:2px;top:131px"><svg><use href="#s-dll"/></svg><span style="letter-spacing:0.1px;margin-right:-0.1px">SkiaSharp.</span><br><span style="letter-spacing:1.33px;margin-right:-1.33px">dll</span></div>
<div class="f" style="left:96.75px;top:131px"><svg><use href="#s-dll"/></svg><span style="letter-spacing:0.7px;margin-right:-0.7px">Vintasoft.</span><br><span style="letter-spacing:0.52px;margin-right:-0.52px">Imaging.dll</span></div>
<div class="f" style="left:191.5px;top:131px"><svg><use href="#s-dll"/></svg><span style="letter-spacing:0.7px;margin-right:-0.7px">Vintasoft.</span><br><span style="letter-spacing:0.38px;margin-right:-0.38px">Imaging.</span><br>DocClean…</div>
<div class="f" style="left:286.25px;top:131px"><svg><use href="#s-dll"/></svg><span style="letter-spacing:0.7px;margin-right:-0.7px">Vintasoft.</span><br><span style="letter-spacing:0.38px;margin-right:-0.38px">Imaging.</span><br><span style="letter-spacing:0.33px;margin-right:-0.33px">Drawing.…</span></div>
<div class="f" style="left:381px;top:131px"><svg><use href="#s-dll"/></svg><span style="letter-spacing:0.7px;margin-right:-0.7px">Vintasoft.</span><br><span style="letter-spacing:0.38px;margin-right:-0.38px">Imaging.</span><br><span style="letter-spacing:0.43px;margin-right:-0.43px">Ocr.dll</span></div>
<div class="f" style="left:475.75px;top:131px"><svg><use href="#s-dll"/></svg><span style="letter-spacing:0.7px;margin-right:-0.7px">Vintasoft.</span><br><span style="letter-spacing:0.38px;margin-right:-0.38px">Imaging.</span><br><span style="letter-spacing:-0.1px;margin-right:0.1px">Ocr.Tesse…</span></div>
<div class="f" style="left:570.5px;top:131px"><svg><use href="#s-dll"/></svg><span style="letter-spacing:0.7px;margin-right:-0.7px">Vintasoft.</span><br><span style="letter-spacing:0.38px;margin-right:-0.38px">Imaging.</span><br><span style="letter-spacing:0.71px;margin-right:-0.71px">Pdf.dll</span></div>
<div class="f" style="left:665.25px;top:131px"><svg><use href="#s-dll"/></svg><span style="letter-spacing:0.7px;margin-right:-0.7px">Vintasoft.</span><br><span style="letter-spacing:0.38px;margin-right:-0.38px">Imaging.</span><br><span style="letter-spacing:0.42px;margin-right:-0.42px">Pdf.Ocr.dll</span></div>
<div class="f" style="left:2px;top:240px"><svg><use href="#s-dll"/></svg><span style="letter-spacing:0.7px;margin-right:-0.7px">Vintasoft.</span><br><span style="letter-spacing:0.38px;margin-right:-0.38px">Imaging.</span><br><span style="letter-spacing:0.22px;margin-right:-0.22px">Pdf.Reso…</span></div>
<div class="f" style="left:96.75px;top:240px"><svg><use href="#s-dll"/></svg><span style="letter-spacing:0.7px;margin-right:-0.7px">Vintasoft.</span><br><span style="letter-spacing:0.37px;margin-right:-0.37px">Shared.dll</span></div>
</div>
</div>
</body>
</html>
